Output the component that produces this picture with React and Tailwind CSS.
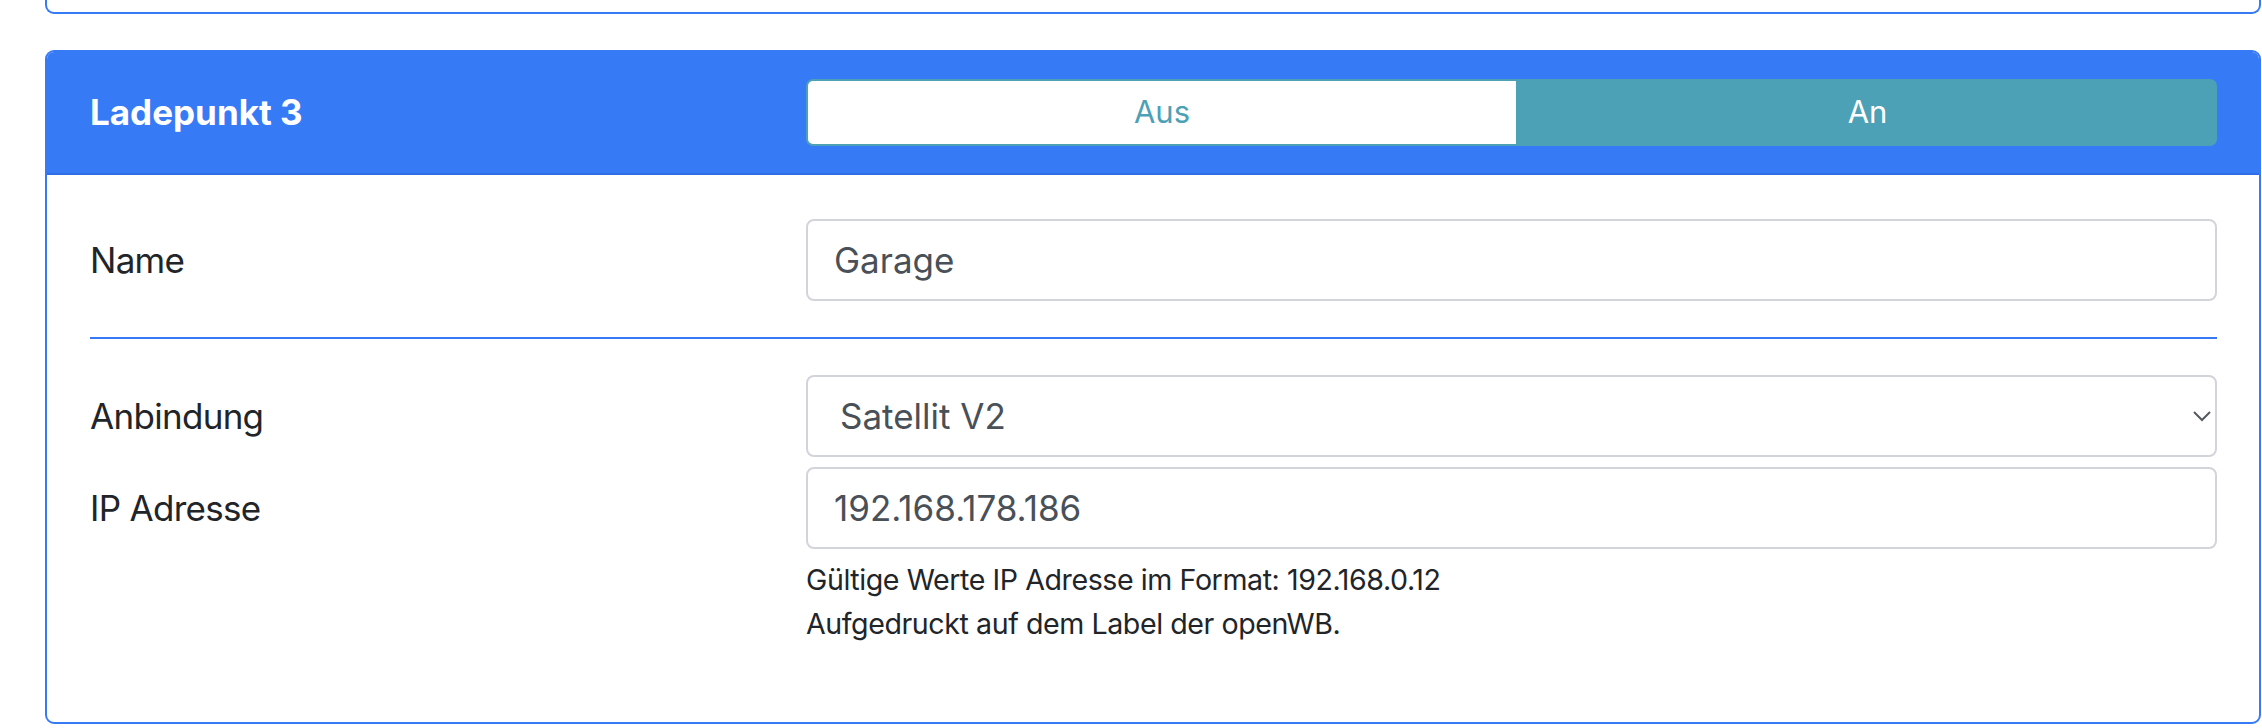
import React from "react";

// Form row: label on the left, control on the right, both centred vertically.
const Row = ({ label, children }) => (
  <div className="grid grid-cols-[716px_1fr] items-center">
    <span className="text-[35px] tracking-[-0.02em] text-[#212529]">{label}</span>
    {children}
  </div>
);

const inputClass =
  "w-full h-[82px] rounded-[8px] border-2 border-[#d1d5da] bg-white pl-[26px] text-[35px] text-[#495057] outline-none font-['Inter',sans-serif]";

const App = () => {
  return (
    <div className="min-h-screen bg-white font-['Inter',sans-serif] text-[#212529]">
      <div className="ml-[45px] mr-[1px]">
        {/* Bottom edge of the previous card */}
        <div className="h-[14px] rounded-b-[9px] border-2 border-t-0 border-[#377af5]" />

        {/* Ladepunkt card */}
        <div className="mt-[36px] overflow-hidden rounded-[9px] border-2 border-[#377af5]">
          {/* Header with on/off toggle */}
          <div className="flex items-center border-b-2 border-[#2f6fe3] bg-[#377af5] pl-[43px] pr-[42px] py-[27px]">
            <h2 className="w-[716px] text-[35px] font-bold text-white">Ladepunkt 3</h2>
            <div className="flex h-[67px] flex-1">
              <button className="w-[712px] rounded-l-[7px] border-2 border-[#4ca1b6] bg-white text-[31px] text-[#4ca1b6]">
                Aus
              </button>
              <button className="flex-1 rounded-r-[7px] bg-[#4ca1b6] text-[31px] text-white">
                An
              </button>
            </div>
          </div>

          {/* Body */}
          <div className="pl-[43px] pr-[42px] pt-[44px] pb-[76px]">
            <Row label="Name">
              <input className={inputClass} defaultValue="Garage" readOnly />
            </Row>

            <hr className="my-[36px] border-0 border-t-2 border-[#377af5]" />

            <div className="flex flex-col gap-[10px]">
              <Row label="Anbindung">
                <div className="flex h-[82px] items-center justify-between rounded-[8px] border-2 border-[#d1d5da] pl-[32px] pr-[3px] text-[35px] text-[#495057]">
                  <span>Satellit V2</span>
                  <svg width="20" height="12" viewBox="0 0 20 12" fill="none">
                    <polyline points="2,2 10,10 18,2" stroke="#555a60" strokeWidth="2" />
                  </svg>
                </div>
              </Row>
              <Row label="IP Adresse">
                <input className={inputClass} defaultValue="192.168.178.186" readOnly />
              </Row>
              <div className="-mt-[1px] grid grid-cols-[716px_1fr]">
                <div />
                <div className="text-[28.6px] leading-[44px] tracking-[-0.015em] text-[#212529]">
                  <p>Gültige Werte IP Adresse im Format: 192.168.0.12</p>
                  <p>Aufgedruckt auf dem Label der openWB.</p>
                </div>
              </div>
            </div>
          </div>
        </div>
      </div>
    </div>
  );
};

export default App;
